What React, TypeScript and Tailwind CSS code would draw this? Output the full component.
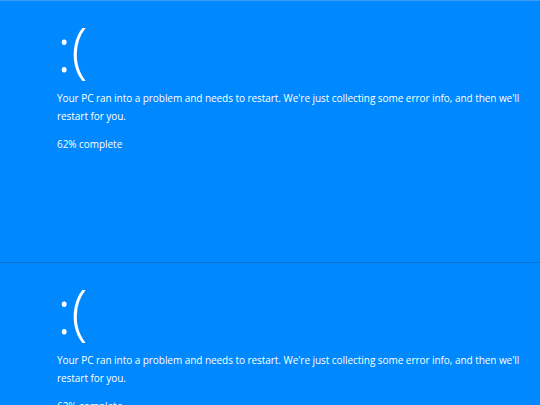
import React from "react";

function Screen() {
  return (
    <div className="h-[261px] pl-[57px] pt-[16px] text-white font-['Open_Sans','Noto_Sans',sans-serif]">
      <div className="text-[60px] leading-[64px] font-light">:(</div>
      <p className="mt-[8px] text-[10px] leading-[18px] tracking-[-0.05px] w-[470px]">
        Your PC ran into a problem and needs to restart. We're just collecting some error info, and then we'll restart for you.
      </p>
      <p className="mt-[10px] text-[10px] leading-[18px] tracking-[-0.05px]">62% complete</p>
    </div>
  );
}

export default function App() {
  return (
    <div className="w-[540px] h-[405px] overflow-hidden bg-[#0088fe]">
      <div className="border-t border-[#3a9bf0]">
        <Screen />
      </div>
      <div className="border-t border-[#0a74d0]">
        <Screen />
      </div>
    </div>
  );
}
